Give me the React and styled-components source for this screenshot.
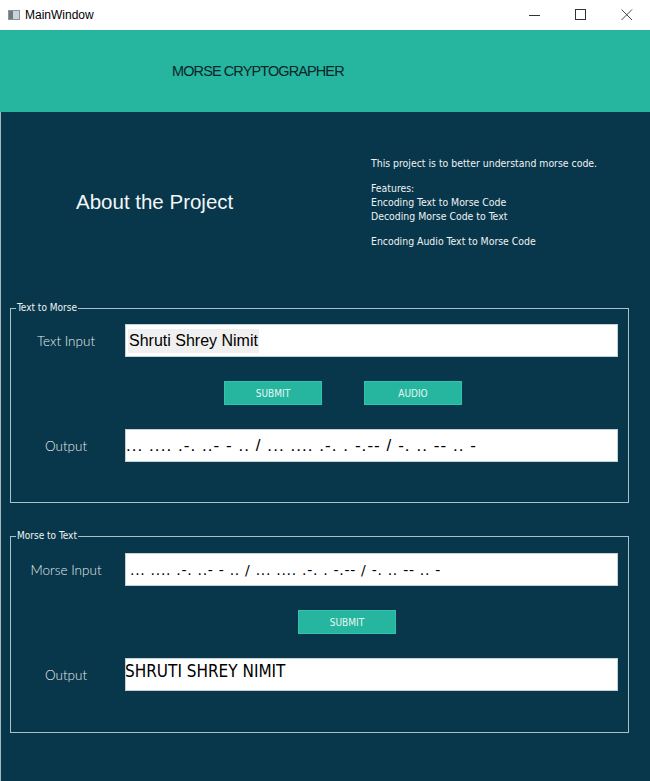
import React from "react";
import styled, { createGlobalStyle } from "styled-components";

const GlobalStyle = createGlobalStyle`
    html, body {
        margin: 0;
        padding: 0;
        background: #ffffff;
    }
    * {
        box-sizing: border-box;
    }
`;

const Window = styled.div`
    width: 650px;
    height: 781px;
    display: flex;
    flex-direction: column;
    font-family: "Liberation Sans", Arial, sans-serif;
    overflow: hidden;
`;

const TitleBar = styled.div`
    height: 30px;
    flex-shrink: 0;
    display: flex;
    align-items: center;
    background: #ffffff;
    padding-left: 8px;
    font-size: 12px;
    color: #000000;
`;

const AppIcon = styled.span`
    width: 12px;
    height: 10px;
    margin-right: 5px;
    background: linear-gradient(to right, #6b7b80 0 4px, #c9d2d4 4px);
    border: 1px solid #8a9599;
`;

const TitleText = styled.span`
    flex: 1;
`;

const Controls = styled.div`
    display: flex;
    height: 100%;
`;

const ControlBtn = styled.div`
    width: 46px;
    height: 100%;
    display: flex;
    align-items: center;
    justify-content: center;
`;

const Header = styled.header`
    height: 82px;
    flex-shrink: 0;
    display: flex;
    align-items: center;
    padding-left: 172px;
    background: #26b6a0;
    color: #0a2528;
    font-size: 14.5px;
    letter-spacing: -0.9px;
`;

const Main = styled.main`
    flex: 1;
    background: #08364a;
    border-left: 1px solid #a6b8bf;
`;

const About = styled.section`
    height: 190px;
    padding-bottom: 10px;
    display: grid;
    grid-template-columns: 370px 1fr;
    align-items: center;
    color: #ffffff;
`;

const AboutTitle = styled.h2`
    margin: 0;
    padding-left: 75px;
    font-weight: normal;
    font-size: 20.5px;
    color: #f2f6f7;
`;

const AboutText = styled.div`
    font-family: "DejaVu Sans Condensed", "Liberation Sans", sans-serif;
    font-size: 10.4px;
    line-height: 14px;
    color: #eef3f4;
    p {
        margin: 0 0 11px;
    }
    p:last-child {
        margin: 0;
    }
`;

const Group = styled.fieldset`
    margin: ${(p) => p.$top || 0}px 21px 0 9px;
    padding: ${(p) => p.$padTop}px 10px ${(p) => p.$padBottom}px 0;
    border: 1px solid #a9c2ca;
    min-inline-size: 0;
    display: grid;
    grid-template-columns: 114px 1fr;
    row-gap: 24px;
    align-items: center;
`;

const Legend = styled.legend`
    padding: 0 1px;
    margin-left: 5px;
    font-family: "DejaVu Sans Condensed", "Liberation Sans", sans-serif;
    font-size: 10px;
    line-height: 12px;
    color: #eef3f4;
`;

const Label = styled.div`
    text-align: center;
    padding-right: 4px;
    font-family: "Lato", "Liberation Sans", sans-serif;
    font-weight: 300;
    font-size: 13.5px;
    line-height: 16px;
    color: #e3ebee;
`;

const Field = styled.div`
    height: 33px;
    background: #ffffff;
    border: 1px solid #c3d2d8;
    display: flex;
    align-items: ${(p) => (p.$top ? "flex-start" : "center")};
    padding-left: ${(p) => p.$pad || 0}px;
    color: #000000;
    white-space: nowrap;
    overflow: hidden;
`;

const Highlight = styled.span`
    background: #f0f0f0;
    font-size: 16px;
    line-height: 24px;
    padding: 0 1px;
`;

const MorseText = styled.span`
    font-size: ${(p) => p.$size || 17}px;
    font-family: ${(p) => p.$font || `"Liberation Sans", Arial, sans-serif`};
    letter-spacing: ${(p) => p.$spacing || 0}px;
`;

const ResultText = styled.span`
    font-family: "DejaVu Sans Condensed", "Liberation Sans", sans-serif;
    font-size: 17px;
    line-height: 22px;
    margin-top: 1px;
    margin-left: -1px;
`;

const ButtonRow = styled.div`
    grid-column: 2;
    display: flex;
    gap: 42px;
    padding-left: ${(p) => p.$offset}px;
`;

const Button = styled.button`
    width: 98px;
    height: 24px;
    background: #26b6a0;
    border: 1px solid #35c2ad;
    color: #e6f7f3;
    font-family: "DejaVu Sans Condensed", "Liberation Sans", sans-serif;
    font-size: 10px;
    padding: 0;
`;

const morse = "... .... .-. ..- - .. / ... .... .-. . -.-- / -. .. -- .. -";

export default function App() {
    return (
        <>
            <GlobalStyle />
            <Window>
                <TitleBar>
                    <AppIcon />
                    <TitleText>MainWindow</TitleText>
                    <Controls>
                        <ControlBtn>
                            <svg width="12" height="12" viewBox="0 0 12 12">
                                <path d="M0 6.5h11" stroke="#333" strokeWidth="1" />
                            </svg>
                        </ControlBtn>
                        <ControlBtn>
                            <svg width="12" height="12" viewBox="0 0 12 12">
                                <rect x="0.5" y="0.5" width="10" height="10" fill="none" stroke="#333" />
                            </svg>
                        </ControlBtn>
                        <ControlBtn>
                            <svg width="12" height="12" viewBox="0 0 12 12">
                                <path d="M0.5 0.5l10.5 10.5M11 0.5L0.5 11" stroke="#333" strokeWidth="0.9" />
                            </svg>
                        </ControlBtn>
                    </Controls>
                </TitleBar>

                <Header>MORSE CRYPTOGRAPHER</Header>

                <Main>
                    <About>
                        <AboutTitle>About the Project</AboutTitle>
                        <AboutText>
                            <p>This project is to better understand morse code.</p>
                            <p>
                                Features:
                                <br />
                                Encoding Text to Morse Code
                                <br />
                                Decoding Morse Code to Text
                            </p>
                            <p>Encoding Audio Text to Morse Code</p>
                        </AboutText>
                    </About>

                    <Group $padTop={10} $padBottom={40}>
                        <Legend>Text to Morse</Legend>
                        <Label>Text Input</Label>
                        <Field $pad={2}>
                            <Highlight>Shruti Shrey Nimit</Highlight>
                        </Field>
                        <ButtonRow $offset={99}>
                            <Button>SUBMIT</Button>
                            <Button>AUDIO</Button>
                        </ButtonRow>
                        <Label>Output</Label>
                        <Field>
                            <MorseText $spacing={1.05}>{morse}</MorseText>
                        </Field>
                    </Group>

                    <Group $top={27} $padTop={11} $padBottom={41}>
                        <Legend>Morse to Text</Legend>
                        <Label>Morse Input</Label>
                        <Field $pad={4}>
                            <MorseText $size={14} $spacing={0.7} $font={`"DejaVu Sans", sans-serif`}>
                                {morse}
                            </MorseText>
                        </Field>
                        <ButtonRow $offset={173}>
                            <Button>SUBMIT</Button>
                        </ButtonRow>
                        <Label>Output</Label>
                        <Field $top>
                            <ResultText>SHRUTI SHREY NIMIT</ResultText>
                        </Field>
                    </Group>
                </Main>
            </Window>
        </>
    );
}
